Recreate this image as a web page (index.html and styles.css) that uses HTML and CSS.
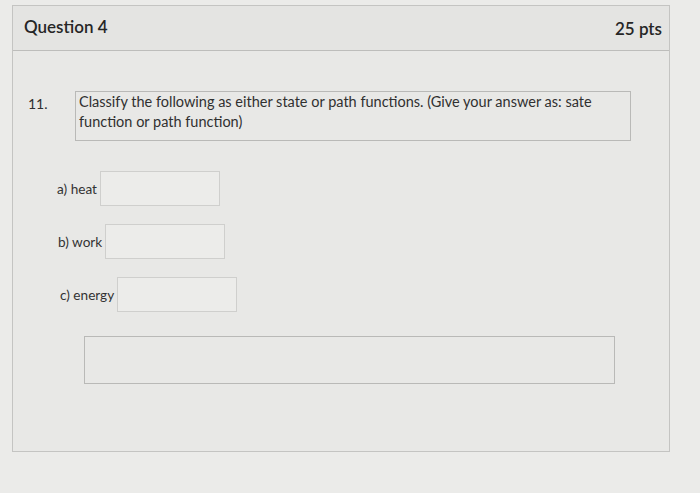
FILE: index.html
```html
<!DOCTYPE html>
<html>
<head>
<meta charset="utf-8">
<link rel="stylesheet" href="styles.css">
</head>
<body>
<div class="card">
  <div class="card-header">
    <span class="q-title">Question 4</span>
    <span class="q-pts">25 pts</span>
  </div>
  <div class="card-body">
    <div class="prompt-row">
      <span class="q-num">11.</span>
      <div class="prompt-box">Classify the following as either state or path functions. (Give your answer as: sate function or path function)</div>
    </div>
    <div class="answers">
      <div class="ans ans-a"><span class="ans-label">a) heat</span><span class="ans-input"></span></div>
      <div class="ans ans-b"><span class="ans-label">b) work</span><span class="ans-input"></span></div>
      <div class="ans ans-c"><span class="ans-label">c) energy</span><span class="ans-input"></span></div>
    </div>
    <div class="big-box"></div>
  </div>
</div>
</body>
</html>
```
FILE: styles.css
```css
html, body {
  margin: 0;
  padding: 0;
}
body {
  background: #ebebe9;
  font-family: Lato, "Open Sans", sans-serif;
  color: #2f2f2f;
  width: 700px;
  height: 493px;
  overflow: hidden;
  padding-top: 5px;
  box-sizing: border-box;
}
.card {
  margin-left: 12px;
  width: 658px;
  height: 447px;
  box-sizing: border-box;
  border: 1px solid #c4c4c2;
  background: #e8e8e6;
}
.card-header {
  height: 45px;
  box-sizing: border-box;
  background: #e4e4e2;
  border-bottom: 1px solid #bdbdbb;
  display: flex;
  justify-content: space-between;
  align-items: center;
  padding: 0 7px 0 11px;
}
.q-title {
  font-size: 17px;
  font-weight: 600;
  color: #262626;
  margin-top: -4px;
}
.q-pts {
  font-size: 17px;
  font-weight: 600;
  color: #262626;
  margin-top: 0;
}
.card-body {
  padding: 40px 0 0 15px;
}
.prompt-row {
  display: flex;
  align-items: flex-start;
}
.q-num {
  font-size: 14px;
  width: 47px;
  padding-top: 4px;
}
.prompt-box {
  width: 556px;
  height: 50px;
  box-sizing: border-box;
  border: 1px solid #b9b9b7;
  padding: 0 3px;
  font-size: 14.5px;
  line-height: 20px;
  color: #303030;
}
.answers {
  display: flex;
  flex-direction: column;
  gap: 18px;
  margin-top: 30px;
  padding-left: 29px;
}
.ans {
  display: flex;
  align-items: center;
  gap: 3px;
}
.ans-b { margin-left: 1px; }
.ans-c { margin-left: 3px; }
.ans-label {
  font-size: 13.6px;
  color: #333;
}
.ans-input {
  display: block;
  width: 120px;
  height: 35px;
  box-sizing: border-box;
  border: 1px solid #cfcfcd;
  background: #ececea;
}
.big-box {
  margin: 24px 0 0 56px;
  width: 531px;
  height: 48px;
  box-sizing: border-box;
  border: 1px solid #b9b9b7;
}
```
